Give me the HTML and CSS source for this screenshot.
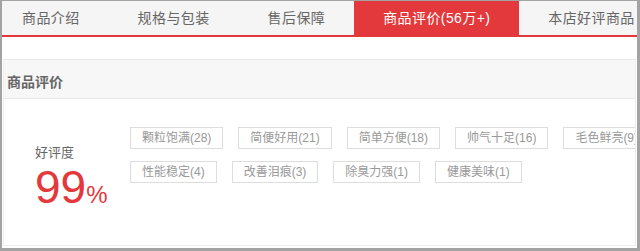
FILE: index.html
```html
<!DOCTYPE html>
<html lang="zh-CN">
<head>
    <meta charset="UTF-8">
    <meta name="viewport" content="width=device-width, initial-scale=1.0">
    <title>商品评价</title>
    <link rel="stylesheet" href="styles.css">
</head>
<body>
    <div class="frame">
        <ul class="tabs">
            <li class="tab">商品介绍</li>
            <li class="tab">规格与包装</li>
            <li class="tab">售后保障</li>
            <li class="tab active">商品评价(56万+)</li>
            <li class="tab">本店好评商品</li>
        </ul>

        <div class="panel">
            <h3 class="panel-title">商品评价</h3>
            <div class="panel-body">
                <div class="rate">
                    <div class="rate-label">好评度</div>
                    <div class="rate-num">99<span class="pct">%</span></div>
                </div>
                <ul class="tags">
                    <li class="tag">颗粒饱满(28)</li>
                    <li class="tag">简便好用(21)</li>
                    <li class="tag">简单方便(18)</li>
                    <li class="tag">帅气十足(16)</li>
                    <li class="tag">毛色鲜亮(9)</li>
                    <li class="tag">性能稳定(4)</li>
                    <li class="tag">改善泪痕(3)</li>
                    <li class="tag">除臭力强(1)</li>
                    <li class="tag">健康美味(1)</li>
                </ul>
            </div>
        </div>
    </div>
</body>
</html>
```

FILE: styles.css
```css
body {
    margin: 0;
    font-family: "Liberation Sans", "Noto Sans CJK SC", sans-serif;
    color: #666;
}

ul {
    list-style: none;
    margin: 0;
    padding: 0;
}

.frame {
    box-sizing: border-box;
    width: 640px;
    height: 251px;
    border-style: solid;
    border-color: #a3a3a3;
    border-width: 1px 3px 3px 2px;
    overflow: hidden;
    background: #fff;
}

.tabs {
    display: flex;
    height: 34px;
    background: #f5f5f5;
    border-bottom: 2px solid #e4393c;
    white-space: nowrap;
}

.tab {
    padding: 0 29px;
    font-size: 14px;
    letter-spacing: 0.4px;
    line-height: 34px;
    color: #666;
    flex-shrink: 0;
}

.tab:first-child {
    padding-left: 20px;
}

.tab.active {
    background: #e4393c;
    color: #fff;
    margin-top: -1px;
    line-height: 36px;
    height: 35px;
}

.panel {
    margin: 22px 1px 0 1px;
    border: 1px solid #eee;
    border-top: none;
    height: 186px;
    overflow: hidden;
}

.panel-title {
    margin: 0;
    height: 38px;
    padding-left: 3px;
    font-size: 14px;
    font-weight: bold;
    line-height: 44px;
    color: #666;
    background: #f7f7f7;
    border-top: 1px solid #e8e8e8;
    border-bottom: 1px solid #e8e8e8;
}

.panel-body {
    display: flex;
    align-items: flex-start;
    padding-top: 28px;
}

.rate {
    flex-shrink: 0;
    width: 95px;
    padding-left: 31px;
    padding-top: 18px;
}

.rate-label {
    font-size: 13px;
    line-height: 16px;
    color: #666;
}

.rate-num {
    margin-top: 3px;
    font-size: 46px;
    line-height: 1;
    color: #e4393c;
}

.pct {
    font-size: 24px;
}

.tags {
    display: flex;
    flex-wrap: wrap;
    align-content: flex-start;
    width: 560px;
    flex-shrink: 0;
    column-gap: 15px;
    row-gap: 12px;
}

.tag {
    height: 20px;
    padding: 0 11px;
    border: 1px solid #ddd;
    font-size: 12px;
    line-height: 20px;
    color: #999;
    white-space: nowrap;
}
```
